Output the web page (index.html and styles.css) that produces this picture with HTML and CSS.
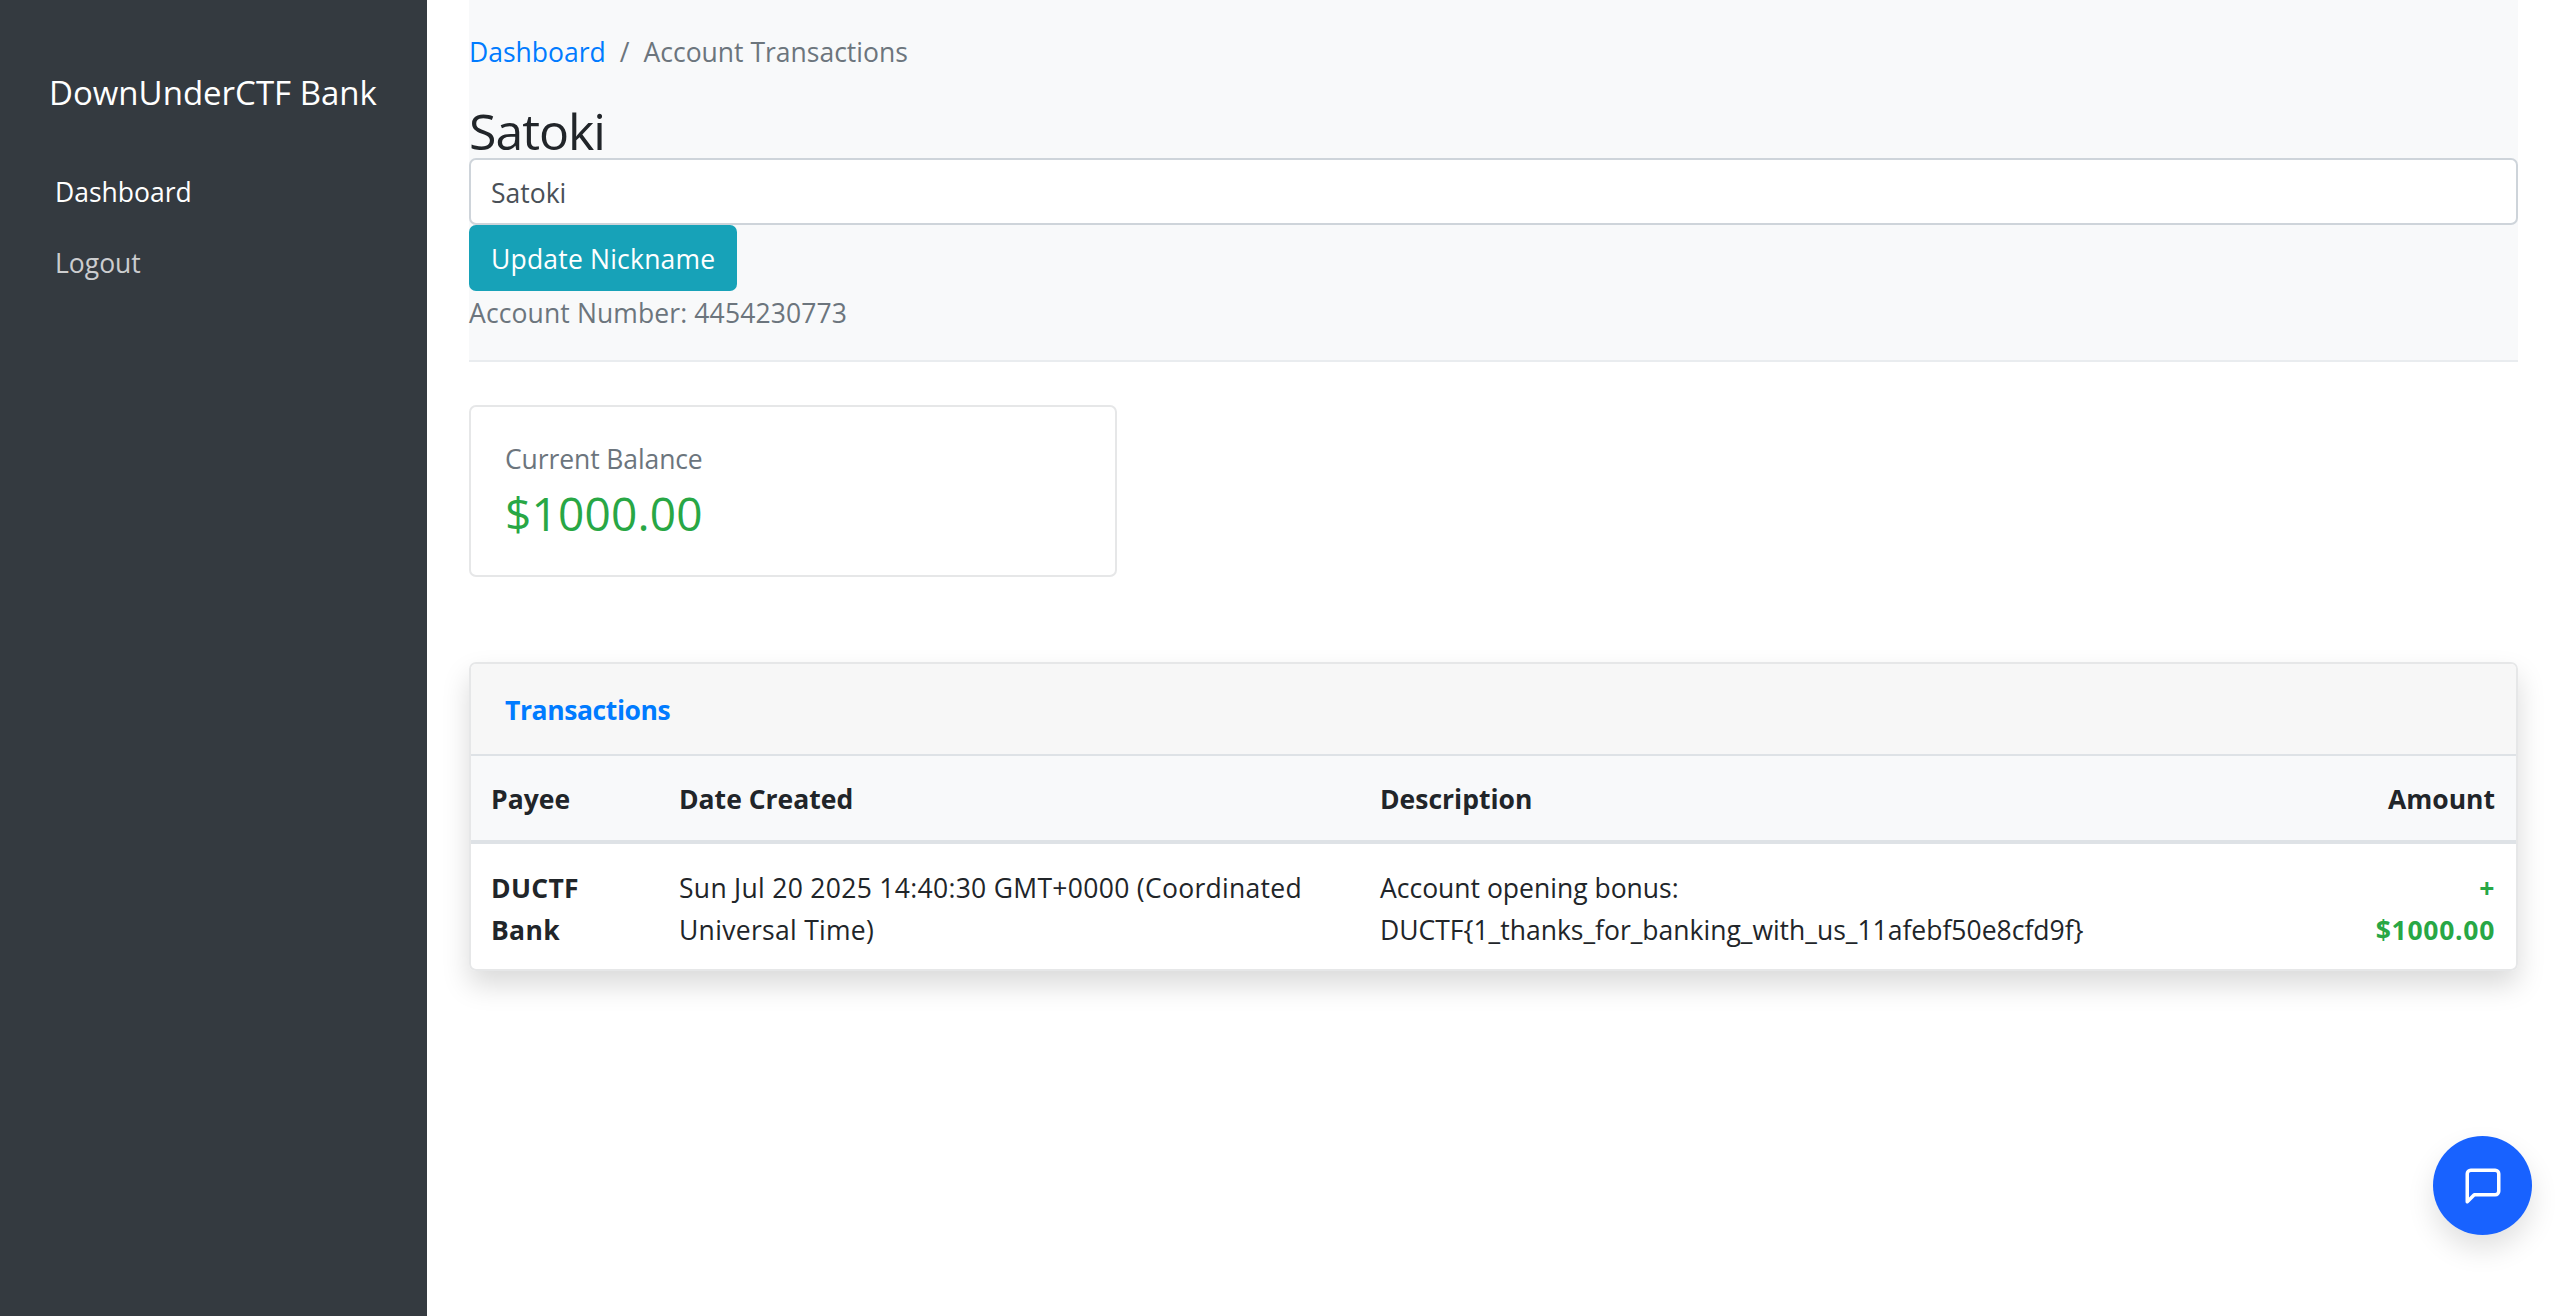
FILE: index.html
```html
<!DOCTYPE html>
<html lang="en">
<head>
    <meta charset="UTF-8">
    <meta name="viewport" content="width=device-width, initial-scale=1.0">
    <title>Account Transactions</title>
    <link rel="stylesheet" href="styles.css">
</head>
<body>
    <nav class="sidebar">
        <div class="brand">DownUnderCTF Bank</div>
        <a class="nav-link active" href="#">Dashboard</a>
        <a class="nav-link" href="#">Logout</a>
    </nav>

    <main class="content">
        <header class="page-header">
            <div class="breadcrumb">
                <a href="#">Dashboard</a>
                <span class="divider">/</span>
                <span>Account Transactions</span>
            </div>
            <h1>Satoki</h1>
            <form>
                <input class="nickname" type="text" value="Satoki">
                <button class="update-btn" type="button">Update Nickname</button>
            </form>
            <p class="account-number">Account Number: 4454230773</p>
        </header>

        <section class="balance-card">
            <div class="balance-label">Current Balance</div>
            <div class="balance-value">$1000.00</div>
        </section>

        <section class="tx-card">
            <div class="tx-title">Transactions</div>
            <table>
                <colgroup>
                    <col class="col-payee">
                    <col class="col-date">
                    <col class="col-desc">
                    <col class="col-amount">
                </colgroup>
                <thead>
                    <tr>
                        <th>Payee</th>
                        <th>Date Created</th>
                        <th>Description</th>
                        <th class="right">Amount</th>
                    </tr>
                </thead>
                <tbody>
                    <tr>
                        <td class="strong payee">DUCTF Bank</td>
                        <td class="date">Sun Jul 20 2025 14:40:30 GMT+0000 (Coordinated Universal Time)</td>
                        <td>Account opening bonus:<br>DUCTF{1_thanks_for_banking_with_us_11afebf50e8cfd9f}</td>
                        <td class="right strong green amount">+<br>$1000.00</td>
                    </tr>
                </tbody>
            </table>
        </section>
    </main>

    <button class="chat-btn" type="button" aria-label="Open chat">
        <svg width="42" height="42" viewBox="0 0 24 24" fill="none" stroke="#fff" stroke-width="2" stroke-linecap="round" stroke-linejoin="round">
            <path d="M21 15a2 2 0 0 1-2 2H7l-4 4V5a2 2 0 0 1 2-2h14a2 2 0 0 1 2 2z"/>
        </svg>
    </button>
</body>
</html>
```

FILE: styles.css
```css
* {
    box-sizing: border-box;
}

body {
    font-family: "Open Sans", "Noto Sans", sans-serif;
    font-size: 26.5px;
    line-height: 42px;
    color: #212529;
    background-color: #fff;
    margin: 0;
    min-height: 100vh;
    display: flex;
}

a {
    text-decoration: none;
}

.sidebar {
    width: 427px;
    flex-shrink: 0;
    background-color: #343a40;
    padding: 70px 0 0 55px;
}

.brand {
    font-size: 33px;
    line-height: 46px;
    color: #fff;
    margin: 0 0 55px -6px;
    white-space: nowrap;
}

.nav-link {
    display: block;
    color: rgba(255, 255, 255, 0.75);
    margin-bottom: 29px;
}

.nav-link.active {
    color: #fff;
}

.content {
    flex: 1;
    min-width: 0;
    padding: 0 42px;
}

.page-header {
    background-color: #f8f9fa;
    border-bottom: 2px solid #e9ecef;
    padding: 31px 0 26px;
}

.breadcrumb {
    color: #6c757d;
    display: flex;
    gap: 14px;
}

.breadcrumb a {
    color: #007bff;
}

h1 {
    font-size: 50px;
    line-height: 67px;
    font-weight: 400;
    letter-spacing: -1px;
    margin: 18px 0 0;
    padding-top: 7px;
    height: 67px;
}

.nickname {
    display: block;
    width: 100%;
    height: 67px;
    padding: 2px 20px 0;
    font: inherit;
    color: #495057;
    background-color: #fff;
    border: 2px solid #ced4da;
    border-radius: 7px;
}

.update-btn {
    display: block;
    height: 66px;
    padding: 2px 22px 0;
    font: inherit;
    letter-spacing: 0.2px;
    color: #fff;
    background-color: #17a2b8;
    border: none;
    border-radius: 7px;
}

.account-number {
    color: #6c757d;
    letter-spacing: 0.12px;
    margin: 1px 0 0;
}

.balance-card {
    width: 648px;
    height: 172px;
    margin-top: 43px;
    padding: 31px 34px;
    border: 2px solid #e6e7e8;
    border-radius: 7px;
}

.balance-label {
    color: #6c757d;
    letter-spacing: -0.1px;
}

.balance-value {
    color: #28a745;
    font-size: 46px;
    line-height: 59px;
    letter-spacing: 0.2px;
    margin-top: 4px;
}

.tx-card {
    margin-top: 85px;
    border: 2px solid #e6e7e8;
    border-radius: 7px;
    box-shadow: 0 14px 28px rgba(0, 0, 0, 0.15);
    overflow: hidden;
}

.tx-title {
    height: 92px;
    padding: 2px 34px 0;
    display: flex;
    align-items: center;
    color: #007bff;
    font-weight: 700;
    letter-spacing: -0.4px;
    background-color: #f7f7f7;
    border-bottom: 2px solid #dee2e6;
}

table {
    width: 100%;
    table-layout: fixed;
    border-collapse: collapse;
}

.col-payee {
    width: 188px;
}

.col-date {
    width: 701px;
}

.col-amount {
    width: 162px;
}

th {
    height: 86px;
    padding: 2px 21px 0 20px;
    text-align: left;
    font-weight: 700;
    background-color: #f8f9fa;
    border-bottom: 4px solid #dee2e6;
}

td {
    padding: 23px 21px 18px 20px;
    vertical-align: top;
}

.date {
    letter-spacing: 0.3px;
}

th.right,
td.right {
    text-align: right;
}

.strong {
    font-weight: 700;
}

.payee {
    letter-spacing: 0.3px;
}

.green {
    color: #28a745;
}

.amount {
    letter-spacing: 0.7px;
}

.chat-btn {
    position: fixed;
    right: 28px;
    bottom: 81px;
    width: 99px;
    height: 99px;
    display: flex;
    align-items: center;
    justify-content: center;
    padding: 0;
    background-color: #1862ff;
    border: none;
    border-radius: 50%;
    box-shadow: 0 14px 28px rgba(0, 0, 0, 0.12);
}
```
